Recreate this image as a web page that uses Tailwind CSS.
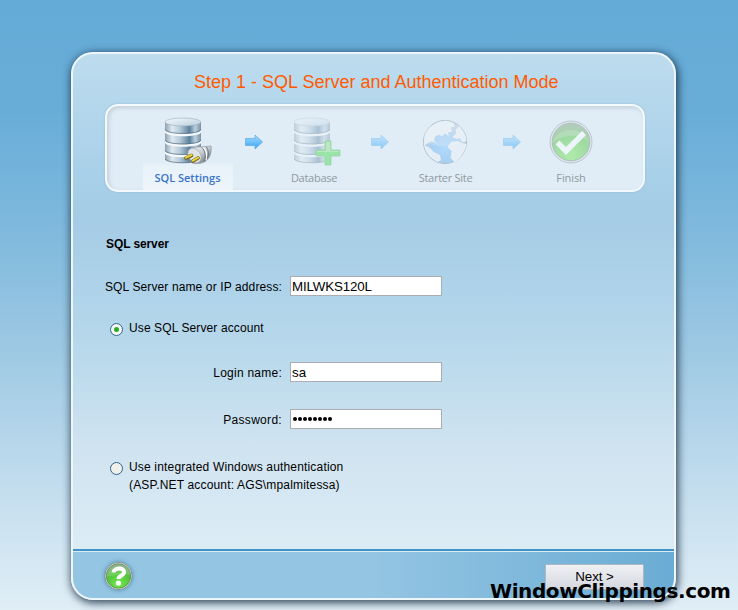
<!DOCTYPE html>
<html lang="en">
<head>
<meta charset="utf-8">
<title>Step 1 - SQL Server and Authentication Mode</title>
<script src="https://cdn.jsdelivr.net/npm/@tailwindcss/browser@4"></script>
</head>
<body class="relative h-[610px] w-[738px] overflow-hidden bg-[linear-gradient(180deg,#64abd7_0px,#68add8_110px,#7fb9dd_230px,#a0cae4_360px,#c6dfef_500px,#e0eef6_610px)] font-['Liberation_Sans',Arial,sans-serif] text-[12px] text-black">
<svg class="absolute h-0 w-0" aria-hidden="true">
  <defs>
    <linearGradient id="metal"><stop offset="0" stop-color="#8da1b1"/><stop offset=".2" stop-color="#dfeaf2"/><stop offset=".42" stop-color="#b4c9d8"/><stop offset=".68" stop-color="#5d819c"/><stop offset=".84" stop-color="#b9cfdf"/><stop offset="1" stop-color="#7b91a3"/></linearGradient>
    <linearGradient id="lid" x2="1" y2="1"><stop offset="0" stop-color="#f5fafd"/><stop offset="1" stop-color="#b9cedd"/></linearGradient>
    <linearGradient id="arrowFill" y2="1" x2="0"><stop offset="0" stop-color="#a9dcff"/><stop offset="1" stop-color="#33a5f6"/></linearGradient>
    <radialGradient id="ocean" cy=".65"><stop offset="0" stop-color="#8ccaff"/><stop offset=".6" stop-color="#7ab8f0"/><stop offset="1" stop-color="#a6bdd2"/></radialGradient>
    <radialGradient id="green" cy=".85" r=".85"><stop offset="0" stop-color="#74ea50"/><stop offset=".6" stop-color="#51c43b"/><stop offset="1" stop-color="#849f82"/></radialGradient>
    <linearGradient id="plug" x2="1" y2="1"><stop offset="0" stop-color="#fff"/><stop offset=".5" stop-color="#c5cbd1"/><stop offset="1" stop-color="#4e5862"/></linearGradient>
    <symbol id="cylinder" viewBox="0 0 48 48">
      <path d="M1 5v37c2 5 34 5 36 0V5z" fill="url(#metal)"/>
      <path d="M1 13c3 5 33 5 36 0v2.500c-3 5-33 5-36 0zM1 23.500c3 5 33 5 36 0V26c-3 5-33 5-36 0zM1 34c3 5 33 5 36 0v2.500c-3 5-33 5-36 0z" fill="#f3f9fd"/>
      <path d="M1 12.700c3 5 33 5 36 0M1 23.200c3 5 33 5 36 0M1 33.700c3 5 33 5 36 0M1 42c3 5 33 5 36 0" fill="none" stroke="#4d6679" stroke-width=".7"/>
      <ellipse cx="19" cy="5" rx="18" ry="4" fill="url(#lid)" stroke="#9dafbc" stroke-width=".6"/>
    </symbol>
    <symbol id="arrow" viewBox="0 0 18 16"><path d="M.5 4.500h9.500V1l7.500 7-7.500 7v-3.500H.5z" fill="url(#arrowFill)" stroke="#63afe3" stroke-width=".8"/></symbol>
  </defs>
</svg>
<main class="mt-[52px] ml-[71px] flex h-[548px] w-[605px] flex-col overflow-hidden rounded-[22px] border-2 border-[#edf6fb] bg-[linear-gradient(180deg,#bddcee_0px,#a9d0e9_120px,#a5cce5_160px,#add2e9_230px,#bbdaec_310px,#cfe3f0_390px,#dcecf5_495px)] shadow-[1px_2px_8px_1px_rgba(20,40,60,.85)]">
  <h1 class="mt-[17px] h-[22px] pl-[121px] text-[18px] leading-[22px] whitespace-nowrap text-[#ff5a00]">Step 1 - SQL Server and Authentication Mode</h1>
  <section class="mt-[11px] ml-[32px] flex h-[88px] w-[540px] shrink-0 rounded-[13px] border-2 border-[#f4f9fd] bg-[#e0edf7] pl-[36px] font-['Open_Sans','Noto_Sans',sans-serif] text-[11px] leading-[14px] tracking-[-0.28px] text-[#8f999f] shadow-[0_0_2px_#8bb6d3,inset_2px_2px_4px_#c3d0da]">
    <div class="flex w-[90px] flex-col items-center bg-[linear-gradient(180deg,transparent_55px,#e8f2f9_60px,#edf5fa_84px)] pt-[11px]">
      <svg class="ml-px h-[49px] w-[49px]" viewBox="0 0 49 49">
        <use href="#cylinder" width="48" height="48"/>
        <path d="M24 36c1-4 6-6 11-6l12-1c1 6-1 12-5 15-5 3-10 3-14 2z" fill="url(#plug)" stroke="#87919a" stroke-width=".6"/>
        <path d="M38 30.500c3 3 4 8 2.500 13.500M42.500 30c2 3 2.500 7 1 11" fill="none" stroke="#5b6670" stroke-width=".8"/>
        <path d="M39.500 30.500c3 3 4 7 2.500 13" fill="none" stroke="#fff" stroke-width="1.200"/>
        <ellipse cx="30.500" cy="38.500" rx="6" ry="8" transform="rotate(-35 30.500 38.500)" fill="#dfe3e7" stroke="#9aa3ab" stroke-width=".6"/>
        <path d="M22 41l5.500-2.500M29 44l5-3" stroke="#6f651d" stroke-width="3.600" stroke-linecap="round"/><path d="M22 40.600l5.500-2.500M29 43.600l5-3" stroke="#e7d137" stroke-width="2.200" stroke-linecap="round"/>
      </svg>
      <span class="mt-[5px] -ml-px font-semibold tracking-normal whitespace-nowrap text-[#3973ca]">SQL Settings</span>
    </div>
    <div class="w-[41px] pt-[28px] pl-[12px]"><svg class="h-[16px] w-[18px]"><use href="#arrow"/></svg></div>
    <div class="flex w-[80px] flex-col items-center pt-[11px]">
      <svg class="ml-[6px] h-[49px] w-[49px] opacity-40" viewBox="0 0 49 49"><use href="#cylinder" width="48" height="48"/><path d="M32 24h6v9h9v6h-9v9h-6v-9h-9v-6h9z" fill="#36d733" stroke="#35a934" stroke-width=".8"/><path d="M33 25h4v9h9v1H24v-1h9z" fill="#8be079"/></svg>
      <span class="mt-[5px]">Database</span>
    </div>
    <div class="w-[51px] pt-[28px] pl-[17px]"><svg class="h-[16px] w-[18px] opacity-50"><use href="#arrow"/></svg></div>
    <div class="flex w-[80px] flex-col items-center pt-[13px]">
      <svg class="-ml-px h-[46px] w-[46px] opacity-55" viewBox="0 0 46 46"><circle cx="23" cy="23" r="21.500" fill="url(#ocean)" stroke="#8196a7"/>
        <path d="M11 6l5-3 8-1.500 7 2 2 4-4 1 1 4-4 1 1 4-4-3-3 3-3-2-4 2-1 4 3 3-5-2-3 1-5 3c-1-9 2-16 9-20.500z" fill="#e9eff3"/>
        <path d="M37 7c4 4 7 9 7.500 15l-4 1-3-4-3 1-4-2 4-4-1-3zM29 23l6-1 5 2 4.500 1c-1 8-6 14-12 18l-4-4 1-7-4-4zM2 26l6 3 4 4 6 3 1 5-3 2C8 40 3 33 2 26z" fill="#e9eff3"/><path d="M2 22c10 7 32 7 42 0V18C42 7 33 2 23 2S3 8 2 18z" fill="#fff" opacity=".25"/></svg>
      <span class="mt-[6px] ml-px whitespace-nowrap">Starter Site</span>
    </div>
    <div class="w-[53px] pt-[28px] pl-[18px]"><svg class="h-[16px] w-[18px] opacity-50"><use href="#arrow"/></svg></div>
    <div class="flex w-[66px] flex-col items-center pt-[13px]">
      <svg class="h-[46px] w-[46px] opacity-45" viewBox="0 0 46 46"><circle cx="23" cy="23" r="21" fill="#dce0e2" stroke="#8b969b"/><circle cx="23" cy="23" r="18.800" fill="url(#green)" stroke="#718675"/><path d="M5 23C9 7 37 7 41 23 32 14 14 16 5 23z" fill="#fff" opacity=".2"/><path d="M9.500 23.500l8.500 8.500 18-18" fill="none" stroke="#fff" stroke-width="5.500"/></svg>
      <span class="mt-[6px] tracking-[-0.1px]">Finish</span>
    </div>
  </section>
  <form class="grid flex-1 content-start pl-[32px]">
    <h2 class="mt-[44px] h-[16px] pl-px font-bold leading-[16px] tracking-[-0.1px]">SQL server</h2>
    <div class="mt-[24px] flex h-[20px] gap-2"><label class="w-[177px] shrink-0 text-right leading-[23px] tracking-[0.12px] whitespace-nowrap">SQL Server name or IP address:</label><input class="h-[20px] w-[152px] border border-[#abadb3] bg-white px-px text-[13.33px] tracking-[-0.15px]" value="MILWKS120L"></div>
    <label class="mt-[23px] flex h-[18px] pl-[5px] leading-[18px] tracking-[0.11px]">
      <svg class="mt-[4px] mr-[6px] h-[13px] w-[13px]" viewBox="0 0 13 13"><circle cx="6.500" cy="6.500" r="6" fill="#f7f8f6" stroke="#31638c"/><circle cx="6.500" cy="6.500" r="2.500" fill="#29ad29"/></svg>Use SQL Server account</label>
    <div class="mt-[25px] flex h-[20px] gap-2"><label class="w-[177px] text-right leading-[23px] tracking-[0.25px]">Login name:</label><input class="h-[20px] w-[152px] border border-[#abadb3] bg-white px-px text-[13.33px]" value="sa"></div>
    <div class="mt-[27px] flex h-[20px] gap-2"><label class="w-[177px] text-right leading-[23px] tracking-[0.3px]">Password:</label><div class="flex h-[20px] w-[152px] items-center gap-px border border-[#abadb3] bg-white pl-[2px]">
      <i class="size-1 rounded-full bg-black"></i><i class="size-1 rounded-full bg-black"></i><i class="size-1 rounded-full bg-black"></i><i class="size-1 rounded-full bg-black"></i><i class="size-1 rounded-full bg-black"></i><i class="size-1 rounded-full bg-black"></i><i class="size-1 rounded-full bg-black"></i><i class="size-1 rounded-full bg-black"></i></div></div>
    <label class="mt-[29px] flex h-[36px] pl-[5px] leading-[18px] tracking-[0.17px]">
      <svg class="mt-[4px] mr-[6px] h-[13px] w-[13px]" viewBox="0 0 13 13"><circle cx="6.500" cy="6.500" r="6" fill="#f0f0ec" stroke="#31638c"/></svg><span>Use integrated Windows authentication<br>(ASP.NET account: AGS\mpalmitessa)</span></label>
  </form>
  <footer class="flex h-[49px] shrink-0 items-start justify-between border-t-2 border-[#3f92c3] bg-[linear-gradient(90deg,#94c5e3_50%,#6aacd4)] pr-[30px] pl-[29px] shadow-[inset_0_1px_#d8edf7]">
    <svg class="mt-[8px] h-[34px] w-[34px] drop-shadow-[0_0_2px_#4d8db3]" viewBox="0 0 34 34"><circle cx="16.500" cy="17" r="13.700" fill="#dce6e3" stroke="#7f9790"/><circle cx="16.500" cy="17" r="12.200" fill="url(#green)" stroke="#50764f" stroke-width=".7"/><path d="M4.500 18C5.500 1 27.500 1 28.500 16 20 14 10 17 4.500 18z" fill="#fff" opacity=".17"/><path d="M11.500 13.500c0-5 10.500-5.500 10.500-.500 0 4-5.500 3.500-5.500 7" fill="none" stroke="#fff" stroke-width="4"/><circle cx="16.400" cy="24" r="2.600" fill="#fff"/></svg>
    <button type="button" class="mt-[13px] h-[26px] w-[99px] rounded-[1px] border border-[#aeb8c0] bg-gradient-to-b from-[#f0f1f4] to-[#d5d7e0] text-[13.33px] tracking-[-0.1px]">Next &gt;</button>
  </footer>
</main>
<div class="absolute top-[578px] left-[490px] font-['DejaVu_Sans',Verdana,sans-serif] text-[20px] leading-[26px] font-bold tracking-[-0.4px] whitespace-nowrap">WindowClippings.com</div>
</body>
</html>
